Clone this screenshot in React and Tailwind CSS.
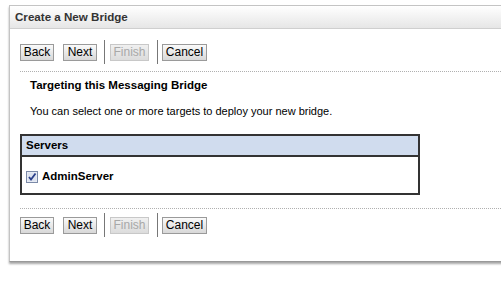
import React from "react";

function Btn({ children, disabled, w }) {
  return (
    <div
      className={
        "h-[17px] flex items-center justify-center border text-[12px] leading-none " +
        (disabled
          ? "border-[#c8c8c8] text-[#a8a8a8] bg-gradient-to-b from-[#f0f0f0] to-[#dcdcdc]"
          : "border-[#9a9a9a] text-black bg-gradient-to-b from-[#fafafa] to-[#d8d8d8]")
      }
      style={{ width: w }}
    >
      {children}
    </div>
  );
}

function ButtonRow() {
  return (
    <div className="flex items-center h-[24px]">
      <Btn w={34}>Back</Btn>
      <div className="w-[9px]" />
      <Btn w={34}>Next</Btn>
      <div className="w-[7px]" />
      <div className="w-px h-[24px] bg-[#777]" />
      <div className="w-[5px]" />
      <Btn w={39} disabled>Finish</Btn>
      <div className="w-[8px]" />
      <div className="w-px h-[24px] bg-[#777]" />
      <div className="w-[4px]" />
      <Btn w={45}>Cancel</Btn>
    </div>
  );
}

function Dotted() {
  return <div className="h-0 border-t border-dotted border-[#b0b0b0]" />;
}

function Checkbox() {
  return (
    <svg width="12" height="12" viewBox="0 0 12 12">
      <rect x="0.5" y="0.5" width="11" height="11" fill="#eef0f6" stroke="#7b8aa8" />
      <rect x="1.5" y="1.5" width="9" height="9" fill="#dde3ef" />
      <path d="M3 6 L5 8.5 L9.5 2.5" fill="none" stroke="#2a3f8a" strokeWidth="1.8" />
    </svg>
  );
}

export default function App() {
  return (
    <div
      className="w-[501px] h-[283px] bg-white overflow-hidden"
      style={{ fontFamily: '"Liberation Sans", Arial, sans-serif' }}
    >
      <div className="pt-[5px] pl-[9px]">
        <div className="w-[520px] border-l border-t border-[#c4c4c4] shadow-[0_2px_2px_rgba(0,0,0,0.35)] border-b border-b-[#999]">
          <div className="h-[23px] flex items-center pl-[5px] bg-gradient-to-b from-white to-[#e6e6e6] border-b border-[#cfcfcf]">
            <span className="text-[11.6px] font-bold text-[#333]">Create a New Bridge</span>
          </div>
          <div className="pl-[10px]">
            <div className="pt-[11px]">
              <ButtonRow />
            </div>
            <div className="pt-[7px]">
              <Dotted />
            </div>
            <div className="pl-[10px] pt-[6px] text-[11.5px] font-bold text-black leading-[14px]">
              Targeting this Messaging Bridge
            </div>
            <div className="pl-[10px] pt-[12px] text-[11px] text-black leading-[14px]">
              You can select one or more targets to deploy your new bridge.
            </div>
            <div className="pt-[16px]">
              <div className="w-[400px] border-2 border-[#333]">
                <div className="h-[21px] flex items-center pl-[4px] bg-[#d0dcee] border-b-2 border-[#333] text-[11.5px] font-bold">
                  Servers
                </div>
                <div className="h-[36px] flex items-center pl-[4px] pt-[3px] gap-[4px] text-[11.5px] font-bold">
                  <Checkbox />
                  <span>AdminServer</span>
                </div>
              </div>
            </div>
            <div className="pt-[13px]">
              <Dotted />
            </div>
            <div className="pt-[4px] pb-[24px]">
              <ButtonRow />
            </div>
          </div>
        </div>
      </div>
    </div>
  );
}
